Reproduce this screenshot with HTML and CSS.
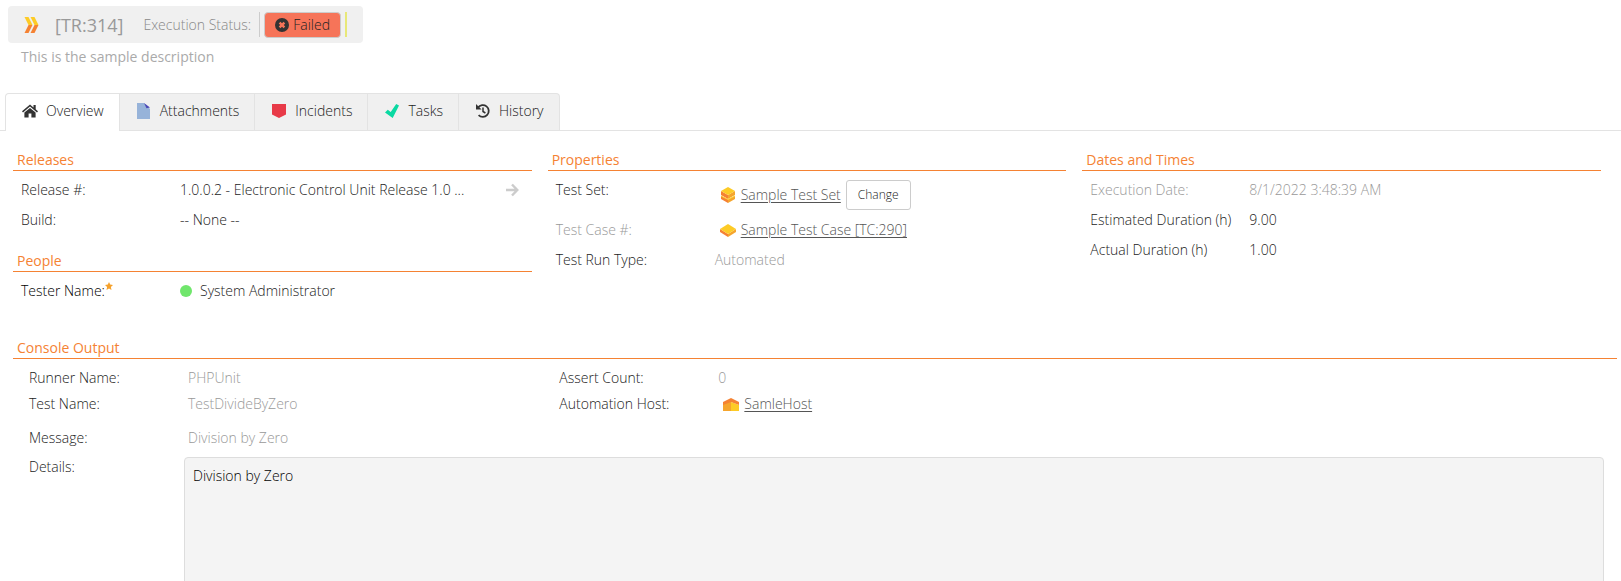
FILE: index.html
```html
<!DOCTYPE html>
<html lang="en">
<head>
<meta charset="utf-8">
<title>Test Run TR:314</title>
<link rel="stylesheet" href="styles.css">
</head>
<body>
<main class="page">
  <header class="header">
    <div class="title-bar">
      <svg class="run-icon" viewBox="0 0 14 16" aria-hidden="true">
        <path fill="#fdcb26" d="M0 0h4l4 8H4zM6 0h4l4 8h-4z"/>
        <path fill="#f58233" d="M4 8h4l-4 8H0zM10 8h4l-4 8H6z"/>
      </svg>
      <h1 class="run-id">[TR:314]</h1>
      <span class="status-label">Execution Status:</span>
      <div class="status">
        <span class="status-value">
          <svg class="status-icon" viewBox="0 0 14 14" aria-hidden="true">
            <circle cx="7" cy="7" r="7" fill="#333"/>
            <path d="M4.600 4.600l4.800 4.800M9.400 4.600l-4.800 4.800" stroke="#f67459" stroke-width="2.400"/>
          </svg>Failed</span>
      </div>
    </div>
    <p class="description">This is the sample description</p>
  </header>

  <nav class="tabs" role="tablist">
    <button class="tab tab-active" role="tab" aria-selected="true">
      <svg class="tab-icon" viewBox="0 0 16 16" aria-hidden="true">
        <path fill="#333" d="M8 1.500L0 8.300l1 1.200L8 3.600l7 5.900 1-1.200-2.300-2V2h-2.200v2.400z"/>
        <path fill="#333" d="M8 4.900L2.400 9.600v4.900h4.200v-4h2.800v4h4.200V9.600z"/>
      </svg>Overview</button>
    <button class="tab" role="tab">
      <svg class="tab-icon" viewBox="0 0 16 16" aria-hidden="true">
        <path fill="#97b3d9" d="M1 0h7l6 6v10H1z"/>
        <path fill="#4b49b6" d="M8 0l6 4.500-3.500.8z"/>
      </svg>Attachments</button>
    <button class="tab" role="tab">
      <svg class="tab-icon" viewBox="0 0 16 16" aria-hidden="true">
        <path fill="#e83a48" d="M1 1h14v10.500L8 15l-7-3.500z"/>
      </svg>Incidents</button>
    <button class="tab" role="tab">
      <svg class="tab-icon" viewBox="0 0 16 16" aria-hidden="true">
        <path fill="#0ad9a2" d="M1 9.500l2.800-2.700L6.700 9l5.500-8L15 2.400 8.700 15z"/>
      </svg>Tasks</button>
    <button class="tab" role="tab">
      <svg class="tab-icon" viewBox="0 0 16 16" aria-hidden="true">
        <path fill="none" stroke="#333" stroke-width="1.800" d="M3 4.600a5.900 5.900 0 1 1 .6 7.500"/>
        <path fill="#333" d="M1 1v5.600h5.600z"/>
        <path fill="none" stroke="#333" stroke-width="1.500" d="M8 4.500v4l2.400 1.500"/>
      </svg>History</button>
  </nav>

  <div class="columns">
    <div class="column">
      <section class="group">
        <h2 class="group-title">Releases</h2>
        <div class="row"><span class="label">Release #:</span><span class="value">1.0.0.2 - Electronic Control Unit Release 1.0 ...</span>
          <a class="go" href="#release" aria-label="Open release"><svg class="go-icon" viewBox="0 0 14 14" aria-hidden="true"><path fill="none" stroke="#ccc" stroke-width="2.400" d="M1 7h11M7 1.500L12.300 7 7 12.500"/></svg></a></div>
        <div class="row"><span class="label">Build:</span><span class="value">-- None --</span></div>
      </section>
      <section class="group group-next">
        <h2 class="group-title">People</h2>
        <div class="row"><span class="label required">Tester Name:<svg class="star" viewBox="0 0 8 8" aria-hidden="true"><path fill="#f5a12c" d="M4 0l1.200 2.600L8 3 5.900 4.900 6.500 8 4 6.500 1.500 8l.6-3.100L0 3l2.800-.4z"/></svg></span><span class="value person"><span class="dot"></span>System Administrator</span></div>
      </section>
    </div>

    <section class="group column">
      <h2 class="group-title">Properties</h2>
      <div class="row"><span class="label">Test Set:</span>
        <span class="value linked">
          <svg class="link-icon" viewBox="0 0 16 16" aria-hidden="true">
            <path fill="#f58233" d="M1 4l7 4v4L1 8zM1 9l7 3.500V16l-7-4z"/>
            <path fill="#f5a52d" d="M15 4L8 8v4l7-4zM15 9l-7 3.500V16l7-4z"/>
            <path fill="#fdcb26" d="M8 0l7 4-7 4-7-4zM1 8.500L8 12l7-3.500v1L8 13 1 9.500z"/>
          </svg>
          <a class="link" href="#test-set">Sample Test Set</a>
          <button class="change">Change</button>
        </span></div>
      <div class="row"><span class="label muted">Test Case #:</span>
        <span class="value linked">
          <svg class="link-icon" viewBox="0 0 16 16" aria-hidden="true">
            <path fill="#f58233" d="M0 7l8 5v3L0 10z"/>
            <path fill="#f5a52d" d="M16 7l-8 5v3l8-5z"/>
            <path fill="#fdcb26" d="M8 2l8 5-8 5-8-5z"/>
          </svg>
          <a class="link" href="#test-case">Sample Test Case [TC:290]</a>
        </span></div>
      <div class="row"><span class="label">Test Run Type:</span><span class="value faded">Automated</span></div>
    </section>

    <section class="group column">
      <h2 class="group-title">Dates and Times</h2>
      <div class="row"><span class="label muted">Execution Date:</span><span class="value faded">8/1/2022 3:48:39 AM</span></div>
      <div class="row"><span class="label">Estimated Duration (h)</span><span class="value">9.00</span></div>
      <div class="row"><span class="label">Actual Duration (h)</span><span class="value">1.00</span></div>
    </section>
  </div>

  <section class="console">
    <h2 class="group-title">Console Output</h2>
    <div class="console-body">
      <div class="pairs">
        <div class="pair"><span class="label">Runner Name:</span><span class="value faded">PHPUnit</span></div>
        <div class="pair"><span class="label">Assert Count:</span><span class="value faded">0</span></div>
        <div class="pair"><span class="label">Test Name:</span><span class="value faded">TestDivideByZero</span></div>
        <div class="pair"><span class="label">Automation Host:</span>
          <span class="value linked">
            <svg class="link-icon" viewBox="0 0 16 16" aria-hidden="true">
              <path fill="#f5a52d" d="M0 7l8-4v12H0z"/>
              <path fill="#fdcb26" d="M8 6l8 3v6H8z"/>
              <path fill="#f58233" d="M0 7.500V6l8-4 8 4v3L8 6 0 9z"/>
            </svg>
            <a class="link" href="#host">SamleHost</a>
          </span></div>
      </div>
      <div class="console-row"><span class="label">Message:</span><span class="value faded">Division by Zero</span></div>
      <div class="console-row details"><label class="label" for="details">Details:</label><textarea class="details-box" id="details" readonly>Division by Zero</textarea></div>
    </div>
  </section>
</main>
</body>
</html>
```
FILE: styles.css
```css
* { box-sizing: border-box; }

body {
  margin: 0;
  background: #fff;
  color: #222;
  font: 300 14px/20px "Open Sans", "Noto Sans", sans-serif;
}

button, textarea { font: inherit; color: inherit; }
h1, h2, p { margin: 0; font-weight: 300; }

.page { height: 100vh; overflow: hidden; }

.header { padding: 6px 8px 0; }

.title-bar {
  display: flex;
  align-items: center;
  width: fit-content;
  height: 37px;
  padding: 0 16px;
  border-radius: 4px;
  background: #f0f0f0;
  color: #888;
}
.run-icon { width: 15px; height: 16px; margin-right: 16px; }
.run-id {
  margin-right: 20px;
  color: #999;
  font-size: 18px;
  font-weight: 400;
  line-height: 28px;
}
.status-label { margin-right: 8px; }
.status {
  display: flex;
  align-items: center;
  height: 25px;
  padding: 0 4px;
  border-left: 1px solid #ccc;
  border-right: 2px solid #e8e878;
}
.status-value {
  display: flex;
  align-items: center;
  gap: 4px;
  height: 26px;
  padding: 0 10px;
  border: 1px solid #ccc;
  border-radius: 4px;
  background: #f67459;
  color: #222;
}
.status-icon { width: 14px; height: 14px; }

.description { padding: 4px 13px 0; color: #aaa; font-weight: 400; }

.tabs {
  display: flex;
  margin-top: 26px;
  padding-left: 5px;
  border-bottom: 1px solid #e3e3e3;
}
.tab {
  display: flex;
  align-items: center;
  gap: 8px;
  height: 37px;
  padding: 0 15px 2px 16px;
  border: 1px solid #e3e3e3;
  border-width: 1px 1px 0 0;
  background: #f0f0f0;
}
.tab:last-child { border-top-right-radius: 4px; }
.tab-active {
  height: 38px;
  margin-bottom: -1px;
  padding-bottom: 3px;
  border-left-width: 1px;
  border-top-left-radius: 4px;
  background: #fff;
}
.tab-icon { width: 16px; height: 16px; }

.columns {
  display: grid;
  grid-template-columns: repeat(3, 1fr);
  gap: 16px;
  padding: 19px 20px 0 13px;
}
.group-next { margin-top: 16px; }
.group-title {
  margin-bottom: 4px;
  padding: 0 4px;
  border-bottom: 1px solid #f58233;
  color: #f58233;
  font-size: 14px;
  font-weight: 400;
}
.row { display: flex; padding: 5px 8px; }
.label { flex: 0 0 159px; }
.value { flex: 1; }
.required { color: #000; }
.muted { color: #999; }
.faded { color: #999; }
.star { width: 8px; height: 8px; vertical-align: 6px; }
.go { display: flex; align-items: center; padding-right: 5px; }
.go-icon { width: 14px; height: 14px; }
.person { display: flex; align-items: center; gap: 8px; }
.dot { width: 12px; height: 12px; border-radius: 50%; background: #70e66c; }
.linked { display: flex; align-items: center; gap: 5px; padding-left: 5px; }
.link-icon { width: 16px; height: 16px; }
.link { color: #555; text-decoration: underline; text-underline-offset: 2px; }
.change {
  height: 30px;
  padding: 0 11px;
  border: 1px solid #ccc;
  border-radius: 3px;
  background: #fff;
  font-size: 12px;
}

.console { padding: 32px 4px 0 13px; }
.console-body { padding: 2px 13px 0 16px; }
.pairs {
  display: grid;
  grid-template-columns: 1fr 2fr;
  column-gap: 8px;
  padding-bottom: 6px;
}
.pair { display: flex; padding: 3px 0; }
.console-row { display: flex; padding: 5px 0; }
.details { padding: 4px 0; }
.details .label { flex-basis: 155px; }
.details-box {
  flex: 1;
  height: 240px;
  padding: 8px;
  border: 1px solid #ddd;
  border-radius: 4px;
  background: #f4f4f4;
  color: #000;
  resize: none;
}
```
